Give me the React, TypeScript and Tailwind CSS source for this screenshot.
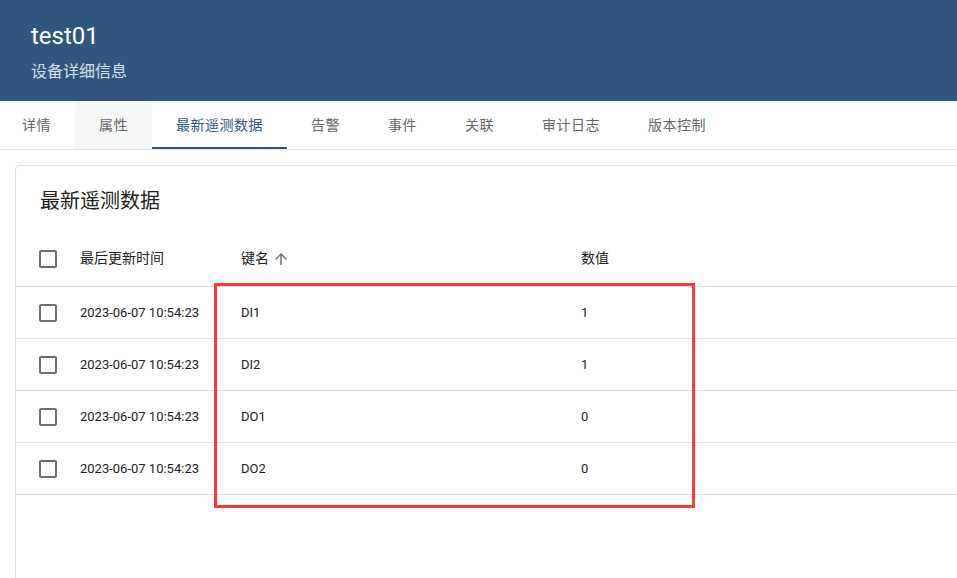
import React from 'react';

const tabs = ['详情', '属性', '最新遥测数据', '告警', '事件', '关联', '审计日志', '版本控制'];

const rows = [
    { time: '2023-06-07 10:54:23', key: 'DI1', value: '1' },
    { time: '2023-06-07 10:54:23', key: 'DI2', value: '1' },
    { time: '2023-06-07 10:54:23', key: 'DO1', value: '0' },
    { time: '2023-06-07 10:54:23', key: 'DO2', value: '0' },
];

const Checkbox = () => (
    <div className="w-[18px] h-[18px] border-2 border-[#6f6f6f] rounded-[2px]" />
);

const ArrowUp = () => (
    <svg viewBox="0 0 24 24" className="w-[18px] h-[18px] ml-[3px] fill-[#707070]">
        <path d="M4 12l1.41 1.41L11 7.83V20h2V7.83l5.58 5.59L20 12l-8-8-8 8z" />
    </svg>
);

export default function App() {
    return (
        <div
            className="w-[957px] h-[578px] overflow-hidden bg-white relative"
            style={{ fontFamily: 'Roboto, "Noto Sans CJK SC", sans-serif' }}
        >
            {/* Page header */}
            <div className="h-[101px] bg-[#305680] pl-[31px] pt-5">
                <div className="text-[24px] leading-8 text-white">test01</div>
                <div className="mt-2 text-[16px] leading-6 text-white/80">设备详细信息</div>
            </div>

            {/* Tabs */}
            <div className="flex h-[49px] border-b border-[#e0e0e0]">
                {tabs.map((tab, i) => (
                    <div
                        key={tab}
                        className={`relative flex items-center pr-6 text-[14px] tracking-[0.5px] ${
                            i === 0 ? 'pl-[22px]' : 'pl-6'
                        } ${i === 1 ? 'bg-[#f5f6f8]' : ''} ${
                            i === 2 ? 'text-[#305680]' : 'text-[#666]'
                        }`}
                    >
                        {tab}
                        {i === 2 && (
                            <div className="absolute left-0 right-0 bottom-0 h-[2px] bg-[#305680]" />
                        )}
                    </div>
                ))}
            </div>

            {/* Card */}
            <div className="pl-[15px] pt-[15px]">
                <div className="w-[1000px] h-[500px] border border-[#e0e0e0] rounded bg-white">
                    <div className="px-6 pt-[19px] h-8 leading-8 text-[20px] text-[#212121] box-content">
                        最新遥测数据
                    </div>

                    <div className="mt-[14px]">
                        {/* Header row */}
                        <div className="flex items-center h-[56px] border-b border-[#e0e0e0] text-[14px] text-[#212121]">
                            <div className="w-[64px] pl-[23px]">
                                <Checkbox />
                            </div>
                            <div className="w-[161px]">最后更新时间</div>
                            <div className="w-[340px] flex items-center">
                                键名
                                <ArrowUp />
                            </div>
                            <div>数值</div>
                        </div>

                        {rows.map((row) => (
                            <div
                                key={row.key}
                                className="flex items-center h-[52px] border-b border-[#e0e0e0] text-[13px] text-[#212121]"
                            >
                                <div className="w-[64px] pl-[23px]">
                                    <Checkbox />
                                </div>
                                <div className="w-[161px]">{row.time}</div>
                                <div className="w-[340px]">{row.key}</div>
                                <div>{row.value}</div>
                            </div>
                        ))}
                    </div>
                </div>
            </div>

            {/* Annotation overlay */}
            <div className="absolute left-[214px] top-[283px] w-[481px] h-[225px] border-[3px] border-[#f53c3c] pointer-events-none" />
        </div>
    );
}
